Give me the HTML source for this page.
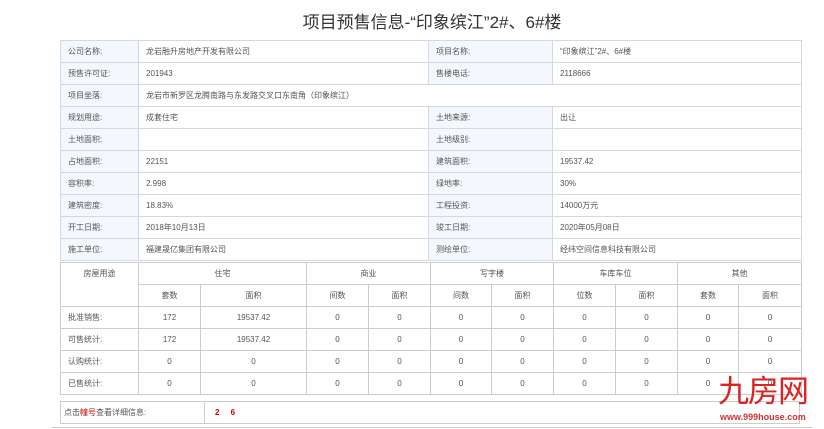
<!DOCTYPE html>
<html><head><meta charset="utf-8"><style>
body{margin:0;width:824px;height:429px;background:#fff;font-family:"Liberation Sans","Noto Sans CJK SC",sans-serif;color:#555;font-size:8px;position:relative;overflow:hidden}
.title{position:absolute;left:0;width:864px;top:8px;text-align:center;font-size:17px;color:#333;font-weight:normal}
table{border-collapse:collapse;position:absolute;table-layout:fixed}
td{border:1px solid #d0dae6;height:21px;padding:0 0 0 7px;white-space:nowrap;overflow:hidden}
.t1{left:60px;top:40px;width:741px}
.t1 td.l{background:#f4f8fc}
.t2{left:60px;top:262px;width:741px}
.t2 td{text-align:center;padding:0;border-color:#ccc}
.t2 td.l{text-align:left;padding-left:7px}
.t3{left:60px;top:401px;width:740px}
.t3 td{border-color:#ccc;height:21px}
.r{color:#c00}
</style></head><body>
<div class="title">项目预售信息-“印象缤江”2#、6#楼</div>
<table class="t1">
<colgroup><col style="width:78px"><col style="width:290px"><col style="width:124px"><col style="width:249px"></colgroup>
<tr><td class="l">公司名称:</td><td>龙岩融升房地产开发有限公司</td><td class="l">项目名称:</td><td>“印象缤江”2#、6#楼</td></tr>
<tr><td class="l">预售许可证:</td><td>201943</td><td class="l">售楼电话:</td><td>2118666</td></tr>
<tr><td class="l">项目坐落:</td><td colspan="3">龙岩市新罗区龙腾南路与东发路交叉口东南角（印象缤江）</td></tr>
<tr><td class="l">规划用途:</td><td>成套住宅</td><td class="l">土地来源:</td><td>出让</td></tr>
<tr><td class="l">土地面积:</td><td></td><td class="l">土地级别:</td><td></td></tr>
<tr><td class="l">占地面积:</td><td>22151</td><td class="l">建筑面积:</td><td>19537.42</td></tr>
<tr><td class="l">容积率:</td><td>2.998</td><td class="l">绿地率:</td><td>30%</td></tr>
<tr><td class="l">建筑密度:</td><td>18.83%</td><td class="l">工程投资:</td><td>14000万元</td></tr>
<tr><td class="l">开工日期:</td><td>2018年10月13日</td><td class="l">竣工日期:</td><td>2020年05月08日</td></tr>
<tr><td class="l">施工单位:</td><td>福建晟亿集团有限公司</td><td class="l">测绘单位:</td><td>经纬空间信息科技有限公司</td></tr>
</table>
<table class="t2">
<colgroup><col style="width:78px"><col style="width:62px"><col style="width:106px"><col style="width:62px"><col style="width:62px"><col style="width:61px"><col style="width:62px"><col style="width:62px"><col style="width:62px"><col style="width:61px"><col style="width:63px"></colgroup>
<tr><td rowspan="2" style="vertical-align:top;padding-top:5px">房屋用途</td><td colspan="2">住宅</td><td colspan="2">商业</td><td colspan="2">写字楼</td><td colspan="2">车库车位</td><td colspan="2">其他</td></tr>
<tr><td>套数</td><td>面积</td><td>间数</td><td>面积</td><td>间数</td><td>面积</td><td>位数</td><td>面积</td><td>套数</td><td>面积</td></tr>
<tr><td class="l">批准销售:</td><td>172</td><td>19537.42</td><td>0</td><td>0</td><td>0</td><td>0</td><td>0</td><td>0</td><td>0</td><td>0</td></tr>
<tr><td class="l">可售统计:</td><td>172</td><td>19537.42</td><td>0</td><td>0</td><td>0</td><td>0</td><td>0</td><td>0</td><td>0</td><td>0</td></tr>
<tr><td class="l">认购统计:</td><td>0</td><td>0</td><td>0</td><td>0</td><td>0</td><td>0</td><td>0</td><td>0</td><td>0</td><td>0</td></tr>
<tr><td class="l">已售统计:</td><td>0</td><td>0</td><td>0</td><td>0</td><td>0</td><td>0</td><td>0</td><td>0</td><td>0</td><td>0</td></tr>
</table>
<table class="t3">
<colgroup><col style="width:144px"><col></colgroup>
<tr><td style="padding-left:3px">点击<span class="r">幢号</span>查看详细信息:</td><td style="padding-left:10px"><b class="r">2</b>&nbsp;&nbsp;&nbsp;&nbsp;&nbsp;<b class="r">6</b></td></tr>
</table>
<div style="position:absolute;left:52px;top:427px;width:760px;height:1px;background:#ccc"></div>
<div style="position:absolute;left:718px;top:376px;font-size:31px;color:#d22;letter-spacing:-1px;line-height:31px">九房网</div>
<div style="position:absolute;left:720px;top:412px;font-size:9px;color:#c33;font-weight:bold">www.999house.com</div>
</body></html>
